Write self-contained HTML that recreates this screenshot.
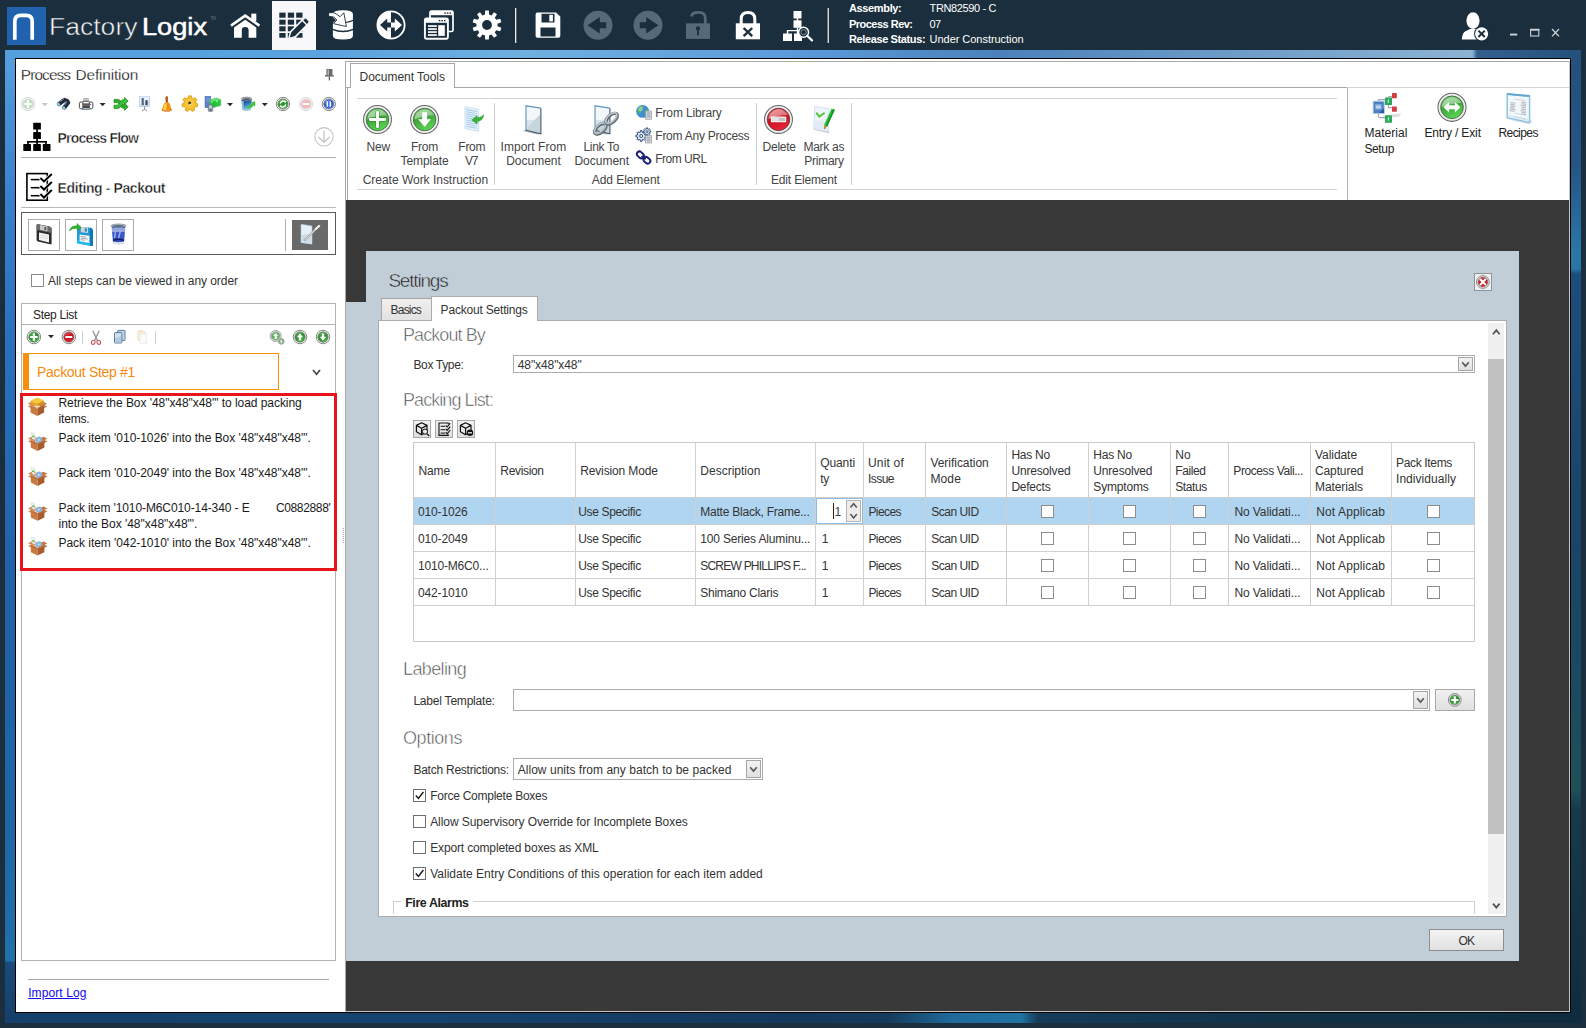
<!DOCTYPE html>
<html>
<head>
<meta charset="utf-8">
<title>FactoryLogix</title>
<style>
*{box-sizing:border-box;margin:0;padding:0}
html,body{width:1586px;height:1028px;overflow:hidden;background:#1b2e3d}
body{font-family:"Liberation Sans",sans-serif;font-size:12px;color:#333;position:relative}
.a{position:absolute}
.t{position:absolute;white-space:pre;line-height:1;font-size:12px}
svg{position:absolute;overflow:visible}
#frame{left:5px;top:50px;width:1576px;height:973px;background:#1d5288}
#ftop{left:0;top:0;width:1576px;height:9px;background:linear-gradient(90deg,#569fdf 0,#5aa3e0 20%,#6eb0e0 33%,#5b9bdb 50%,#4b82bb 63%,#6d9cc8 78%,#8db3d3 93.1%,#33608f 93.4%,#24507c 100%)}
#fleft{left:0;top:0;width:11px;height:973px;background:linear-gradient(180deg,#569fdf 0,#3a80cc 15%,#2c70bd 30%,#2062a8 55%,#1f66a6 80%,#2070a8 93.6%,#1a4a7a 93.8%,#16406c 100%)}
#fright{left:1565px;top:0;width:11px;height:973px;background:linear-gradient(180deg,#24507c 0,#245585 12%,#2a78a8 21%,#2a74a6 22.5%,#1c4e7c 23%,#1a4468 50%,#1b4a60 66%,#1f5058 76%,#163a4c 78%,#0f2c3e 100%)}
#fbot{left:0;top:962px;width:1576px;height:11px;background:linear-gradient(90deg,#16406c 0,#164470 25%,#14385c 50%,#153a5c 56%,#1f6a9a 60%,#2272a2 64.5%,#163c5a 65.5%,#123248 80%,#0f2c3e 100%)}
#content{left:15px;top:58px;width:1556px;height:955px;background:#fff;border:1px solid #000}
.cb{position:absolute;width:13px;height:13px;border:1px solid #8c8c8c;background:#fff}
.btn{position:absolute;border:1px solid #a8a8a8;background:linear-gradient(#f4f4f4,#dfdfdf)}
</style>
</head>
<body>
<div id="frame" class="a"><div id="ftop" class="a"></div><div id="fleft" class="a"></div><div id="fright" class="a"></div><div id="fbot" class="a"></div></div>
<div id="content" class="a"></div>
<svg style="left:0;top:0" width="1586" height="50" viewBox="0 0 1586 50"><rect x="7" y="7" width="39" height="38" fill="#2062ad"/><path d="M14.8 39.8 V21.4 Q14.8 15.3 20.9 15.3 H26.1 Q32.2 15.3 32.2 21.4 V39.8" fill="none" stroke="#fff" stroke-width="3.7"/><path d="M231 25.6 L245.2 15.6 L259.4 25.6" fill="none" stroke="#fff" stroke-width="2.6" stroke-linejoin="miter"/><path d="M234 27.5 L245.2 19.8 L256.3 27.5 V37.8 H248.6 V30 Q248.6 27 245.2 27 Q241.8 27 241.8 30 V37.8 H234Z" fill="#fff"/><rect x="251.3" y="13.6" width="5" height="7.5" fill="#fff"/><rect x="272" y="1" width="44" height="49" fill="#f8f8fa"/><rect x="279.3" y="12.6" width="6.3" height="5.1" fill="#1b2e3d"/><rect x="287.8" y="12.6" width="6.3" height="5.1" fill="#1b2e3d"/><rect x="296.2" y="12.6" width="6.3" height="5.1" fill="#1b2e3d"/><rect x="279.3" y="19.7" width="6.3" height="5" fill="#1b2e3d"/><rect x="287.8" y="19.7" width="6.3" height="5" fill="#1b2e3d"/><rect x="296.2" y="19.7" width="6.3" height="5" fill="#1b2e3d"/><rect x="279.3" y="26.3" width="6.3" height="5" fill="#1b2e3d"/><rect x="287.8" y="26.3" width="6.3" height="5" fill="#1b2e3d"/><rect x="296.2" y="26.3" width="6.3" height="5" fill="#1b2e3d"/><rect x="279.3" y="33" width="6.3" height="4.7" fill="#1b2e3d"/><rect x="287.8" y="33" width="6.3" height="4.7" fill="#1b2e3d"/><rect x="296.2" y="33" width="6.3" height="4.7" fill="#1b2e3d"/><path d="M289.6 37.6 L291.2 31.8 L303.8 19.2 L308 23.4 L295.4 36Z" fill="#f8f8fa" stroke="#f8f8fa" stroke-width="2.6" stroke-linejoin="round"/><path d="M289.8 37.4 L291.3 32.2 L302.2 21.3 L305.9 25 L295 35.9Z M303.3 20.2 L304.6 18.9 Q305.4 18.1 306.3 19 L308.2 20.9 Q309 21.8 308.2 22.6 L306.9 23.9Z" fill="#1b2e3d"/><path d="M332.9 14 Q332.9 10.3 343 10.3 Q352.9 10.3 352.9 14 V36 Q352.9 39.5 343 39.5 Q332.9 39.5 332.9 36Z" fill="#fff"/><path d="M332.5 29.3 Q343 33.6 353.3 29.3" fill="none" stroke="#1b2e3d" stroke-width="1.4"/><path d="M345.5 22.5 Q350 22 353.3 20.3" fill="none" stroke="#1b2e3d" stroke-width="1.2"/><path d="M332 16.8 L336 20 L332 24Z" fill="#1b2e3d"/><path d="M329 13 L334.5 12.8 L340.1 16.7 L343.8 12.7 L346.4 26.5 L333.5 23.7 L336.8 20 L334.2 17.2 L329 16.2Z" fill="#fff" stroke="#1b2e3d" stroke-width="0.9" stroke-linejoin="miter"/><path d="M329 13.4 H333 V15.8 H329Z" fill="#fff"/><circle cx="391" cy="25" r="13.6" fill="none" stroke="#fff" stroke-width="1.8"/><path d="M391 11 A14 14 0 0 0 391 39Z" fill="#fff"/><path d="M380 25 L387.2 18.5 V22.4 H391 V27.6 H387.2 V31.5Z" fill="#1b2e3d"/><path d="M402 25 L394.8 18.5 V22.4 H391 V27.6 H394.8 V31.5Z" fill="#fff"/><rect x="430" y="11" width="23" height="20.5" rx="1.6" fill="#1b2e3d" stroke="#fff" stroke-width="1.7"/><rect x="430.5" y="11" width="22" height="4.2" fill="#fff"/><rect x="444.3" y="12.4" width="1.5" height="1.4" fill="#1b2e3d"/><rect x="446.9" y="12.4" width="1.5" height="1.4" fill="#1b2e3d"/><rect x="449.5" y="12.4" width="1.5" height="1.4" fill="#1b2e3d"/><rect x="424.9" y="18.4" width="23" height="20.3" rx="1.6" fill="#1b2e3d" stroke="#fff" stroke-width="1.9"/><rect x="425" y="18.6" width="22.8" height="4.2" fill="#fff"/><rect x="438.8" y="19.9" width="1.5" height="1.4" fill="#1b2e3d"/><rect x="441.4" y="19.9" width="1.5" height="1.4" fill="#1b2e3d"/><rect x="444" y="19.9" width="1.5" height="1.4" fill="#1b2e3d"/><rect x="428" y="25.2" width="8.8" height="1.7" fill="#fff"/><rect x="428" y="28.2" width="8.8" height="1.7" fill="#fff"/><rect x="428" y="31.2" width="8.8" height="1.7" fill="#fff"/><rect x="428" y="34.2" width="8.8" height="1.7" fill="#fff"/><rect x="438.2" y="25.2" width="6.6" height="10.7" fill="#fff"/><path d="M484.95 14.60 L485.17 10.52 L488.83 10.52 L489.05 14.60 L491.45 15.38 L494.03 12.21 L496.99 14.36 L494.77 17.79 L496.26 19.84 L500.21 18.78 L501.34 22.26 L497.52 23.74 L497.52 26.26 L501.34 27.74 L500.21 31.22 L496.26 30.16 L494.77 32.21 L496.99 35.64 L494.03 37.79 L491.45 34.62 L489.05 35.40 L488.83 39.48 L485.17 39.48 L484.95 35.40 L482.55 34.62 L479.97 37.79 L477.01 35.64 L479.23 32.21 L477.74 30.16 L473.79 31.22 L472.66 27.74 L476.48 26.26 L476.48 23.74 L472.66 22.26 L473.79 18.78 L477.74 19.84 L479.23 17.79 L477.01 14.36 L479.97 12.21 L482.55 15.38Z M482.10 25.00 a4.90 4.90 0 1 0 9.80 0 a4.90 4.90 0 1 0 -9.80 0Z" fill="#fff" fill-rule="evenodd"/><rect x="515" y="8" width="1.3" height="35" fill="#e8eaec"/><rect x="827.6" y="8" width="1.3" height="35" fill="#e8eaec"/><path d="M537.5 12.6 H556 L560.3 16.5 V36 Q560.3 37.8 558.5 37.8 H537.5 Q535.6 37.8 535.6 36 V14.4 Q535.6 12.6 537.5 12.6Z M541.5 13.8 V22.5 H554.5 V13.8Z M540.5 27.5 V36.5 H555.5 V27.5Z" fill="#fff" fill-rule="evenodd"/><rect x="549.3" y="14.8" width="3.6" height="6.6" fill="#fff"/><circle cx="598" cy="25.2" r="14.5" fill="#566978"/><path d="M587.6 25.2 L599.8 17 V22.2 H606.2 V28.2 H599.8 V33.4Z" fill="#1b2e3d"/><circle cx="648" cy="25.2" r="14.5" fill="#566978"/><path d="M658.4 25.2 L646.2 17 V22.2 H639.8 V28.2 H646.2 V33.4Z" fill="#1b2e3d"/><rect x="686" y="23.3" width="24" height="15.6" fill="#566978"/><path d="M691.5 16.5 Q691.8 12.4 698.5 12.4 Q705.3 12.4 705.3 18 V24" fill="none" stroke="#566978" stroke-width="2.8"/><circle cx="698" cy="28.4" r="2.1" fill="#1b2e3d"/><rect x="697.1" y="28.4" width="1.8" height="7" fill="#1b2e3d"/><rect x="735.8" y="23.3" width="24.2" height="16" fill="#fff"/><path d="M741.2 24 V19 Q741.2 12.5 748 12.5 Q754.8 12.5 754.8 19 V24" fill="none" stroke="#fff" stroke-width="3"/><path d="M743.6 28 L752.2 36.2 M752.2 28 L743.6 36.2" stroke="#1b2e3d" stroke-width="2.4" fill="none"/><rect x="793.5" y="11" width="8" height="7.5" fill="#fff"/><rect x="793.5" y="20.3" width="8" height="7.5" fill="#fff"/><rect x="796.8" y="18" width="1.4" height="3" fill="#fff"/><rect x="783" y="33.5" width="9" height="7.5" fill="#fff"/><rect x="794" y="33.5" width="8" height="7.5" fill="#fff"/><path d="M787.5 34 V30.6 H802 M797.5 28 V34" fill="none" stroke="#fff" stroke-width="1.4"/><circle cx="803.6" cy="32.2" r="5" fill="#1b2e3d" stroke="#fff" stroke-width="1.5"/><circle cx="803.6" cy="32.2" r="2.6" fill="none" stroke="#9aa6b0" stroke-width="0.8"/><path d="M807.4 36 L812 40.4" stroke="#fff" stroke-width="2.3" stroke-linecap="round"/><ellipse cx="1473" cy="20.6" rx="6.6" ry="8.4" fill="#fff"/><path d="M1461.8 39.6 Q1462 32.5 1466 31 L1470 29 H1476 L1480 31 Q1484 32.5 1484.2 39.6Z" fill="#fff"/><circle cx="1481.6" cy="33.8" r="7.6" fill="#1b2e3d"/><circle cx="1481.6" cy="33.8" r="6.6" fill="#fff"/><path d="M1478.4 30.6 L1484.8 37 M1484.8 30.6 L1478.4 37" stroke="#1b2e3d" stroke-width="2" fill="none"/><rect x="1510" y="33.6" width="7.2" height="1.9" fill="#cdd2d7"/><rect x="1530.6" y="29.4" width="8.2" height="6.6" fill="none" stroke="#cdd2d7" stroke-width="1.1"/><rect x="1530.1" y="28.9" width="9.2" height="1.8" fill="#cdd2d7"/><path d="M1552 29 L1559 36.4 M1559 29 L1552 36.4" stroke="#cdd2d7" stroke-width="1.3" fill="none"/></svg><div class="t" style="left:49.2px;top:16.0px;font-size:23.5px;letter-spacing:0.00px;color:#f4f6f8;-webkit-text-stroke:0.5px #1b2e3d;transform-origin:0 0;transform:scaleX(1.1294);">Factory</div><div class="t" style="left:142.2px;top:16.0px;font-size:23.5px;letter-spacing:0.00px;color:#fff;-webkit-text-stroke:0.5px #fff;transform-origin:0 0;transform:scaleX(1.1568);">Logix</div><div class="t" style="left:210.4px;top:17.0px;font-size:4.6px;letter-spacing:-1.02px;color:#5f6e7c;">TM</div><div class="t" style="left:849.0px;top:3.0px;font-size:11px;letter-spacing:-0.36px;color:#fff;font-weight:bold;">Assembly:</div><div class="t" style="left:929.6px;top:3.0px;font-size:11px;letter-spacing:-0.37px;color:#fff;">TRN82590 - C</div><div class="t" style="left:849.0px;top:19.0px;font-size:11px;letter-spacing:-0.52px;color:#fff;font-weight:bold;">Process Rev:</div><div class="t" style="left:929.6px;top:19.0px;font-size:11px;letter-spacing:-0.72px;color:#fff;">07</div><div class="t" style="left:849.0px;top:34.0px;font-size:11px;letter-spacing:-0.38px;color:#fff;font-weight:bold;">Release Status:</div><div class="t" style="left:929.6px;top:34.0px;font-size:11px;letter-spacing:-0.04px;color:#fff;">Under Construction</div><div class="t" style="left:20.8px;top:67.0px;font-size:15.4px;letter-spacing:-0.89px;color:#000;-webkit-text-stroke:0.3px #fff;">Process</div><div class="t" style="left:75.6px;top:67.0px;font-size:15.4px;letter-spacing:-0.16px;color:#000;-webkit-text-stroke:0.3px #fff;">Definition</div><svg style="left:0;top:0" width="346" height="1012" viewBox="0 0 346 1012"><g transform="translate(325 68.6)"><rect x="1.4" y="0.4" width="6" height="6.4" fill="#6a6a6a"/><rect x="2.6" y="1" width="1.2" height="5.4" fill="#c8c8c8"/><rect x="0" y="6.6" width="8.8" height="1.3" fill="#555"/><rect x="3.8" y="7.8" width="1.2" height="4" fill="#555"/></g><g opacity="0.32"><defs><linearGradient id="g1" x1="0.2" y1="0" x2="0.6" y2="1"><stop offset="0" stop-color="#58c254"/><stop offset="0.45" stop-color="#2a8f2c"/><stop offset="1" stop-color="#3fb53c"/></linearGradient></defs><circle cx="28" cy="104" r="6.65" fill="#f3f3f3" stroke="#7a7a7a" stroke-width="0.9"/><circle cx="28" cy="104" r="5.112" fill="url(#g1)" stroke="#767a76" stroke-width="0.7"/><g transform="translate(28 104) scale(7.1)"><path d="M-0.52 0 H0.52 M0 -0.52 V0.52" stroke="#fff" stroke-width="0.3"/></g></g><path d="M41.8 103.05 h6 l-3 3.1Z" fill="#c4c4c4"/><g><g transform="rotate(-36 61.4 102)"><rect x="56.2" y="100" width="10.6" height="4.3" rx="1.8" fill="#222e3c"/><rect x="56.5" y="100.5" width="2.4" height="3.3" rx="1" fill="#86d2f6"/><path d="M60.2 100.9 h1 M62.4 100.9 h1 M64.4 100.9 h0.8" stroke="#dfe6ec" stroke-width="0.9"/></g><g transform="rotate(-52 66.2 105)"><rect x="61" y="102.9" width="10.2" height="4.3" rx="1.8" fill="#222e3c"/><rect x="61.3" y="103.4" width="2.4" height="3.3" rx="1" fill="#86d2f6"/><path d="M65 103.8 h1 M67.2 103.8 h1" stroke="#dfe6ec" stroke-width="0.9"/></g><path d="M64.8 98.4 Q68.4 98 69.8 101.2 L67.4 101.8 L64.8 100.2Z" fill="#222e3c"/></g><g><rect x="83.2" y="98.2" width="5.6" height="4.4" rx="0.8" fill="#9a9a9a"/><rect x="83.6" y="99" width="4.8" height="1.4" fill="#c8c8c8"/><rect x="79.4" y="102" width="13.4" height="6.8" rx="1.4" fill="#fafafa" stroke="#3a3a3a" stroke-width="0.9"/><path d="M82.4 102 h7.4 v6.8 h-7.4Z" fill="#4a4648"/><rect x="83.4" y="102" width="5.4" height="1.4" fill="#fff"/><path d="M82.4 104.4 h7.4 v1.6 h-7.4Z" fill="#6e6a6c"/><rect x="82.6" y="108" width="7" height="1.6" fill="#bdeef4" stroke="#444" stroke-width="0.5"/><rect x="90.2" y="103.8" width="0.9" height="1.2" fill="#2a4cff"/></g><path d="M99.6 103.05 h6 l-3 3.1Z" fill="#2a2a2a"/><g transform="translate(121 104)"><path d="M-7 -4.6 H-3.2 Q-1.4 -4.6 0 -2.6 L1.6 -0.2 Q2.6 1.2 3.6 1.2 V-0.8 L7.2 2.8 L3.6 6.4 V4.4 Q1 4.4 -0.6 2.2 L-2.2 -0.2 Q-3 -1.4 -4 -1.4 H-7Z" fill="#2fae2c" stroke="#16801a" stroke-width="0.7"/><path d="M-7 4.4 H-3.2 Q-1.4 4.4 0 2.4 L1.6 0 Q2.6 -1.4 3.6 -1.4 V0.6 L7.2 -3 L3.6 -6.6 V-4.6 Q1 -4.6 -0.6 -2.4 L-2.2 0 Q-3 1.2 -4 1.2 H-7Z" fill="#3cc238" stroke="#16801a" stroke-width="0.7"/></g><g><rect x="139.4" y="96.3" width="10.2" height="10.2" fill="#d4e6f8" stroke="#a9c6e4" stroke-width="0.7"/><path d="M139.8 96.6 L149.2 96.6 L149.2 100 Q144 102 139.8 105Z" fill="#eef5fc" opacity="0.7"/><rect x="141.6" y="98" width="2.2" height="7.2" fill="#5b6778"/><rect x="145.4" y="100.2" width="2.2" height="5" fill="#39465c"/><path d="M144.5 106.5 V109.6 M141.8 111.2 L144.5 109.2 L147.2 111.2" stroke="#8a9096" stroke-width="1" fill="none"/></g><g><path d="M165.6 97 Q166.8 95.4 168 97 L167.8 102.6 H165.8Z" fill="#8e4a10"/><ellipse cx="166.8" cy="98.6" rx="1.3" ry="2.2" fill="#b0661c"/><path d="M165.2 102.2 H168.4 Q170.4 103.6 170.8 107.6 L172 109.8 Q166.8 112.4 161.6 109.8 L162.8 107.6 Q163.2 103.6 165.2 102.2Z" fill="#f28c12"/><path d="M164.6 103.8 Q166 103 166.6 103.4 L166.4 110.4 Q164.6 110.4 163.2 109.6 Q164 106 164.6 103.8Z" fill="#ffd945"/><path d="M161.6 109.8 Q166.8 112.6 172 109.8 L171.8 110.6 Q166.8 113 161.8 110.6Z" fill="#c65a08"/></g><path d="M187.99 98.01 L188.47 95.83 L191.33 95.83 L191.81 98.01 L193.16 98.66 L195.16 97.68 L196.94 99.91 L195.54 101.64 L195.87 103.11 L197.89 104.06 L197.26 106.84 L195.02 106.82 L194.09 108.00 L194.60 110.17 L192.03 111.41 L190.65 109.65 L189.15 109.65 L187.77 111.41 L185.20 110.17 L185.71 108.00 L184.78 106.82 L182.54 106.84 L181.91 104.06 L183.93 103.11 L184.26 101.64 L182.86 99.91 L184.64 97.68 L186.64 98.66Z M188.30 103.70 a1.60 1.60 0 1 0 3.20 0 a1.60 1.60 0 1 0 -3.20 0Z" fill="#f4bd2a" stroke="#d8920e" stroke-width="0.7" stroke-linejoin="round" fill-rule="evenodd"/><circle cx="189.9" cy="103.7" r="4.6" fill="#f9cf46" opacity="0.7"/><circle cx="189.7" cy="102.9" r="1.5" fill="#3a2a0c"/><circle cx="190.2" cy="104.4" r="0.8" fill="#fff" opacity="0.8"/><g><rect x="205" y="96.3" width="5.8" height="11.4" fill="#5d82c6" stroke="#4468ac" stroke-width="0.5"/><path d="M205.6 98 h4.4 M205.6 99.6 h4.4 M205.6 101.2 h4.4" stroke="#8fa9dc" stroke-width="0.6"/><path d="M209.6 100 L216.4 98 L220.8 99.6 V105.6 L214 107.4 L209.6 105.6Z" fill="#22c93a" stroke="#86a08a" stroke-width="0.5"/><path d="M209.6 100 L214 101.6 L220.8 99.6 L216.4 98Z" fill="#5fe070"/><path d="M214 101.6 V107.4" stroke="#1a9c2c" stroke-width="0.6"/><path d="M211 101.6 l1.6 0.6 M216 101.4 l2 -0.6" stroke="#e6ffe8" stroke-width="0.8"/><rect x="208.2" y="104.4" width="4.6" height="7" rx="0.8" fill="#8d9aa6" stroke="#5a6874" stroke-width="0.5"/><rect x="209.2" y="105.6" width="2.6" height="2.6" fill="#c9d4dc"/><circle cx="210.5" cy="110" r="0.7" fill="#2a4a78"/></g><path d="M227 103.05 h6 l-3 3.1Z" fill="#2a2a2a"/><g><defs><linearGradient id="binb" x1="0" y1="0" x2="0.3" y2="1"><stop offset="0" stop-color="#173a78"/><stop offset="0.5" stop-color="#2a6eb4"/><stop offset="1" stop-color="#8ad6f6"/></linearGradient></defs><path d="M241.6 99 H251.6 L251 109.4 Q246.6 111.6 242.2 109.4Z" fill="url(#binb)"/><path d="M242 101 L243.6 101 L243.6 108.6 L242.4 108.4Z" fill="#a8e0fa" opacity="0.8"/><path d="M242.2 109.2 Q246.6 111 251 109.2 L250.9 110 Q246.6 112 242.3 110Z" fill="#b4bcc2"/><ellipse cx="246.6" cy="98.8" rx="5.1" ry="1.7" fill="#b9bdc0" stroke="#6a7076" stroke-width="0.6"/><ellipse cx="246.6" cy="99.1" rx="3.8" ry="0.9" fill="#4a5866"/><path d="M246.6 107 Q250.4 106.6 251.8 103.6 L250.4 102.8 L255 101.4 L255 106.2 L253.6 105.2 Q251.6 108.8 246.8 108.4Z" fill="#2fd02e" stroke="#7f9a84" stroke-width="0.4"/></g><path d="M261.8 103.05 h6 l-3 3.1Z" fill="#2a2a2a"/><g opacity="1"><defs><linearGradient id="g2" x1="0.2" y1="0" x2="0.6" y2="1"><stop offset="0" stop-color="#58c254"/><stop offset="0.45" stop-color="#2a8f2c"/><stop offset="1" stop-color="#3fb53c"/></linearGradient></defs><circle cx="283" cy="104" r="6.65" fill="#f3f3f3" stroke="#7a7a7a" stroke-width="0.9"/><circle cx="283" cy="104" r="5.112" fill="url(#g2)" stroke="#767a76" stroke-width="0.7"/><g transform="translate(283 104) scale(7.1)"><path d="M-0.38 -0.05 A0.4 0.4 0 0 1 0.3 -0.3 M0.38 0.05 A0.4 0.4 0 0 1 -0.3 0.3" stroke="#fff" stroke-width="0.2" fill="none"/><path d="M0.12 -0.5 L0.5 -0.42 L0.3 -0.08Z M-0.12 0.5 L-0.5 0.42 L-0.3 0.08Z" fill="#fff"/></g></g><g opacity="0.3"><defs><linearGradient id="g3" x1="0.2" y1="0" x2="0.6" y2="1"><stop offset="0" stop-color="#e85a62"/><stop offset="0.45" stop-color="#c8101e"/><stop offset="1" stop-color="#e02030"/></linearGradient></defs><circle cx="306" cy="104" r="6.65" fill="#f3f3f3" stroke="#7a7a7a" stroke-width="0.9"/><circle cx="306" cy="104" r="5.112" fill="url(#g3)" stroke="#767a76" stroke-width="0.7"/><g transform="translate(306 104) scale(7.1)"><rect x="-0.48" y="-0.15" width="0.96" height="0.3" rx="0.06" fill="#fff"/></g></g><g opacity="1"><defs><linearGradient id="g4" x1="0.2" y1="0" x2="0.6" y2="1"><stop offset="0" stop-color="#7aa0f0"/><stop offset="0.45" stop-color="#2d58d0"/><stop offset="1" stop-color="#4a7af0"/></linearGradient></defs><circle cx="328.8" cy="104" r="6.65" fill="#f3f3f3" stroke="#7a7a7a" stroke-width="0.9"/><circle cx="328.8" cy="104" r="5.112" fill="url(#g4)" stroke="#767a76" stroke-width="0.7"/><g transform="translate(328.8 104) scale(7.1)"><rect x="-0.32" y="-0.36" width="0.22" height="0.72" fill="#fff"/><rect x="0.1" y="-0.36" width="0.22" height="0.72" fill="#fff"/></g></g><g fill="#000"><rect x="33.2" y="122.7" width="7.7" height="6.9" rx="0.6"/><rect x="33.2" y="132.1" width="7.7" height="6.9" rx="0.6"/><rect x="36.2" y="129" width="1.7" height="4"/><rect x="36.2" y="138.6" width="1.7" height="6"/><rect x="27.2" y="141" width="19.6" height="1.6"/><rect x="27.2" y="141" width="1.6" height="4"/><rect x="45.2" y="141" width="1.6" height="4"/><rect x="23.3" y="144.1" width="7.7" height="6.9" rx="0.6"/><rect x="33.2" y="144.1" width="7.7" height="6.9" rx="0.6"/><rect x="42.8" y="144.1" width="7.7" height="6.9" rx="0.6"/></g><circle cx="324" cy="136.8" r="9.2" fill="none" stroke="#c4c4c4" stroke-width="1.1"/><path d="M324 130.8 V142 M318.6 137 L324 142.4 L329.4 137" fill="none" stroke="#c4c4c4" stroke-width="1.3"/><g><rect x="26.9" y="173.6" width="20.4" height="26.6" fill="none" stroke="#000" stroke-width="1.6"/><rect x="30.8" y="178.85" width="9" height="1.5" fill="#000"/><path d="M40.4 178 L44 181.4 L51.8 174" fill="none" stroke="#fff" stroke-width="3.4"/><path d="M40.4 178 L44 181.4 L51.8 174" fill="none" stroke="#000" stroke-width="2"/><rect x="30.8" y="186.95" width="9" height="1.5" fill="#000"/><path d="M40.4 186.1 L44 189.5 L51.8 182.1" fill="none" stroke="#fff" stroke-width="3.4"/><path d="M40.4 186.1 L44 189.5 L51.8 182.1" fill="none" stroke="#000" stroke-width="2"/><rect x="30.8" y="194.95" width="9" height="1.5" fill="#000"/><path d="M40.4 194.1 L44 197.5 L51.8 190.1" fill="none" stroke="#fff" stroke-width="3.4"/><path d="M40.4 194.1 L44 197.5 L51.8 190.1" fill="none" stroke="#000" stroke-width="2"/></g></svg><div class="t" style="left:57.6px;top:131.0px;font-size:14px;letter-spacing:-0.82px;color:#111;font-weight:bold;-webkit-text-stroke:0.4px #fff;">Process Flow</div><div class="a" style="left:21px;top:157px;width:315px;height:1px;background:#b0b0b0"></div><div class="t" style="left:57.6px;top:181.0px;font-size:14px;letter-spacing:-0.40px;color:#111;font-weight:bold;-webkit-text-stroke:0.4px #fff;">Editing - Packout</div><div class="a" style="left:21px;top:207px;width:315px;height:1px;background:#b8b8b8"></div><div class="a" style="left:21px;top:212px;width:315px;height:43px;border:1px solid #5a5a5a;background:#fff"></div><div class="a" style="left:28px;top:219px;width:32px;height:32px;border:1px solid #ababab;background:#fff"></div><div class="a" style="left:65px;top:219px;width:32px;height:32px;border:1px solid #ababab;background:#fff"></div><div class="a" style="left:102px;top:219px;width:32px;height:32px;border:1px solid #ababab;background:#fff"></div><div class="a" style="left:285px;top:219px;width:1px;height:32px;background:#b0b0b0"></div><div class="a" style="left:292px;top:220px;width:36px;height:30px;background:#696969"></div><svg style="left:0;top:0" width="346" height="1012" viewBox="0 0 346 1012"><g transform="translate(36 224)"><path d="M0.6 1.2 Q0.6 0 2 0.2 L13.4 2.4 Q15.4 2.8 15.6 4.6 V19.4 Q15.6 20.6 14 20.2 L1.8 17.4 Q0.6 17 0.6 15.8Z" fill="#2c2c2c"/><path d="M0.6 1.2 Q0.6 0 2 0.2 L13.4 2.4 Q15.4 2.8 15.6 4.6 V9 L0.6 6Z" fill="#6c6c6c"/><path d="M4 1 L11.4 2.4 V7.2 L4 5.8Z" fill="#c9c9c9"/><rect x="8.4" y="3" width="1.8" height="3" fill="#555"/><path d="M3 8.6 L13 10.6 V18.4 L3 16Z" fill="#f2f2f2"/><path d="M4 11 L12 12.6 M4 13 L12 14.6" stroke="#ccc" stroke-width="0.6"/></g><g transform="translate(77 226.4)"><path d="M0 1.6 Q0 0.4 1.4 0.4 L12 1 Q15.8 1.4 16 5 V18.6 Q16 19.8 14.6 19.6 L1.2 17.2 Q0 17 0 15.8Z" fill="#1e9ad6"/><path d="M13 1.2 Q15.8 1.6 16 5 V18.6 Q16 19.8 14.6 19.6 L13 19.3Z" fill="#0f78b4"/><path d="M0 13 L13 15.4 V19.3 L1.2 17.2 Q0 17 0 15.8Z" fill="#20b8ee"/><path d="M3.8 0.6 L11 1 V6.6 L3.8 5.8Z" fill="#d2d2d2"/><rect x="7.8" y="2" width="2" height="3.2" fill="#1e86c8"/><path d="M2.6 8 L12.4 9.4 V16.6 L2.6 14.8Z" fill="#f4f8fa"/><path d="M3.6 10 L9 10.8 M3.6 11.6 L11 12.7 M3.6 13.2 L8 13.9" stroke="#777" stroke-width="0.6"/><path d="M-7.6 4.6 Q-6.6 -0.6 0 -0.6 V-3 L4.2 0.8 L0 4.2 V2 Q-5 1.6 -7.6 4.6Z" fill="#2fb12c" stroke="#1d8a22" stroke-width="0.4"/></g><g transform="translate(111 224)"><path d="M0.6 1.6 H14.4 L13 19 Q7.5 21.4 2 19Z" fill="#3a56c8"/><path d="M0.8 4 H14.2 L13.8 8 H1.2Z" fill="#b4c2ea" opacity="0.75"/><path d="M4.6 6 L3.6 14 M9.6 6 L7.4 15" stroke="#9fb2f0" stroke-width="1.4"/><path d="M2 15.4 Q7.5 13 13 15.4 L12.9 17 Q7.5 15.4 2.1 17Z" fill="#16206a"/><path d="M2 17.4 Q7.5 19 13 17.4 L12.9 19.2 Q7.5 21.4 2.1 19.2Z" fill="#e4e8ec"/><ellipse cx="7.5" cy="1.8" rx="7.3" ry="1.8" fill="#aeb8bc" stroke="#7c8890" stroke-width="0.7"/><ellipse cx="7.5" cy="2" rx="5.6" ry="1" fill="#5a6e88"/></g><g transform="translate(301 224.3)"><path d="M-0.8 19 L10.8 20.8 L11.4 20 L0 18.2Z" fill="#3c4850"/><path d="M0 0 L11 1.6 V20 L0 18.4Z" fill="#e6f0f6" stroke="#a8cbe0" stroke-width="0.6"/><path d="M0.4 10.4 L10.6 9.4 V19.6 L0.4 18Z" fill="#cfdde6"/><path d="M2.6 15.8 L18 0.4 L19.4 1.6 L4.4 16.2Z" fill="#dcdcdc" stroke="#7a7a7a" stroke-width="0.5"/><path d="M13.4 4.8 L18 0.4 L19.4 1.6 L14.8 6Z" fill="#f4f4f4"/></g></svg><div class="a" style="left:31px;top:274px;width:13px;height:13px;border:1px solid #8a8a8a;background:#fff"></div><div class="t" style="left:48.0px;top:275.0px;font-size:12px;letter-spacing:-0.06px;color:#333;">All steps can be viewed in any order</div><div class="a" style="left:21px;top:303px;width:315px;height:658px;border:1px solid #b2b2b2;background:#fff"></div><div class="t" style="left:33.0px;top:309.0px;font-size:12px;letter-spacing:-0.30px;color:#222;">Step List</div><div class="a" style="left:22px;top:324px;width:313px;height:1px;background:#b2b2b2"></div><div class="a" style="left:82px;top:331px;width:1px;height:13px;background:#d0d0d0"></div><div class="a" style="left:155px;top:331px;width:1px;height:13px;background:#d0d0d0"></div><svg style="left:0;top:0" width="346" height="1012" viewBox="0 0 346 1012"><g opacity="1"><defs><linearGradient id="g5" x1="0.2" y1="0" x2="0.6" y2="1"><stop offset="0" stop-color="#58c254"/><stop offset="0.45" stop-color="#2a8f2c"/><stop offset="1" stop-color="#3fb53c"/></linearGradient></defs><circle cx="33.9" cy="337" r="6.75" fill="#f3f3f3" stroke="#7a7a7a" stroke-width="0.9"/><circle cx="33.9" cy="337" r="5.184" fill="url(#g5)" stroke="#767a76" stroke-width="0.7"/><g transform="translate(33.9 337) scale(7.2)"><path d="M-0.52 0 H0.52 M0 -0.52 V0.52" stroke="#fff" stroke-width="0.3"/></g></g><path d="M48 335.05 h6 l-3 3.1Z" fill="#2a2a2a"/><g opacity="1"><defs><linearGradient id="g6" x1="0.2" y1="0" x2="0.6" y2="1"><stop offset="0" stop-color="#e85a62"/><stop offset="0.45" stop-color="#c8101e"/><stop offset="1" stop-color="#e02030"/></linearGradient></defs><circle cx="68.8" cy="337" r="6.75" fill="#f3f3f3" stroke="#7a7a7a" stroke-width="0.9"/><circle cx="68.8" cy="337" r="5.184" fill="url(#g6)" stroke="#767a76" stroke-width="0.7"/><g transform="translate(68.8 337) scale(7.2)"><rect x="-0.48" y="-0.15" width="0.96" height="0.3" rx="0.06" fill="#fff"/></g></g><g transform="translate(96 337.3)"><path d="M-3.2 -6.6 L1.4 3.2 M3.2 -6.6 L-1.4 3.2" stroke="#8a9098" stroke-width="1.3" fill="none"/><ellipse cx="-2.8" cy="5" rx="1.7" ry="2.1" fill="none" stroke="#c0484a" stroke-width="1" transform="rotate(25 -2.8 5)"/><ellipse cx="2.8" cy="5" rx="1.7" ry="2.1" fill="none" stroke="#c0484a" stroke-width="1" transform="rotate(-25 2.8 5)"/></g><g transform="translate(114 330)" opacity="1"><rect x="3.6" y="0.4" width="7.4" height="10" rx="0.6" fill="#c4d8ea" stroke="#47709a" stroke-width="0.9"/><rect x="0.5" y="2.6" width="7.4" height="10.4" rx="0.6" fill="#d4e2ee" stroke="#47709a" stroke-width="0.9"/><path d="M1.2 8 L7.2 6 V12.4 H1.2Z" fill="#b4c8da"/></g><g transform="translate(137 330)" opacity="0.45"><rect x="0.4" y="1" width="7.6" height="9.6" rx="0.8" fill="#f0d8a0" stroke="#d8b870" stroke-width="0.6"/><rect x="2.4" y="0" width="3.6" height="2" fill="#d8c090"/><rect x="3" y="4" width="6.8" height="9.6" fill="#f4f4f4" stroke="#c8c8c8" stroke-width="0.6"/></g><g opacity="0.75"><g opacity="1"><defs><linearGradient id="g7" x1="0.2" y1="0" x2="0.6" y2="1"><stop offset="0" stop-color="#58c254"/><stop offset="0.45" stop-color="#2a8f2c"/><stop offset="1" stop-color="#3fb53c"/></linearGradient></defs><circle cx="275.7" cy="336" r="5.55" fill="#f3f3f3" stroke="#7a7a7a" stroke-width="0.9"/><circle cx="275.7" cy="336" r="4.32" fill="url(#g7)" stroke="#767a76" stroke-width="0.7"/><g transform="translate(275.7 336) scale(6)"><path d="M-0.17 0.5 H0.17 V0.02 H0.44 L0 -0.52 L-0.44 0.02 H-0.17Z" fill="#fff"/></g></g><g opacity="1"><defs><linearGradient id="g8" x1="0.2" y1="0" x2="0.6" y2="1"><stop offset="0" stop-color="#58c254"/><stop offset="0.45" stop-color="#2a8f2c"/><stop offset="1" stop-color="#3fb53c"/></linearGradient></defs><circle cx="281.3" cy="341.4" r="2.85" fill="#f3f3f3" stroke="#7a7a7a" stroke-width="0.9"/><circle cx="281.3" cy="341.4" r="2.376" fill="url(#g8)" stroke="#767a76" stroke-width="0.7"/><g transform="translate(281.3 341.4) scale(3.3)"><path d="M-0.17 0.5 H0.17 V0.02 H0.44 L0 -0.52 L-0.44 0.02 H-0.17Z" fill="#fff"/></g></g></g><g opacity="1"><defs><linearGradient id="g9" x1="0.2" y1="0" x2="0.6" y2="1"><stop offset="0" stop-color="#58c254"/><stop offset="0.45" stop-color="#2a8f2c"/><stop offset="1" stop-color="#3fb53c"/></linearGradient></defs><circle cx="300" cy="337" r="6.75" fill="#f3f3f3" stroke="#7a7a7a" stroke-width="0.9"/><circle cx="300" cy="337" r="5.184" fill="url(#g9)" stroke="#767a76" stroke-width="0.7"/><g transform="translate(300 337) scale(7.2)"><path d="M-0.17 0.5 H0.17 V0.02 H0.44 L0 -0.52 L-0.44 0.02 H-0.17Z" fill="#fff"/></g></g><g opacity="1"><defs><linearGradient id="g10" x1="0.2" y1="0" x2="0.6" y2="1"><stop offset="0" stop-color="#58c254"/><stop offset="0.45" stop-color="#2a8f2c"/><stop offset="1" stop-color="#3fb53c"/></linearGradient></defs><circle cx="323" cy="337" r="6.75" fill="#f3f3f3" stroke="#7a7a7a" stroke-width="0.9"/><circle cx="323" cy="337" r="5.184" fill="url(#g10)" stroke="#767a76" stroke-width="0.7"/><g transform="translate(323 337) scale(7.2)"><path d="M-0.17 -0.5 H0.17 V-0.02 H0.44 L0 0.52 L-0.44 -0.02 H-0.17Z" fill="#fff"/></g></g><path d="M313 370 L316.5 374.2 L320 370" fill="none" stroke="#444" stroke-width="1.7"/><rect x="342.6" y="528" width="1.4" height="1" fill="#b0b0b0"/><rect x="342.6" y="530" width="1.4" height="1" fill="#b0b0b0"/><rect x="342.6" y="532" width="1.4" height="1" fill="#b0b0b0"/><rect x="342.6" y="534" width="1.4" height="1" fill="#b0b0b0"/><rect x="342.6" y="536" width="1.4" height="1" fill="#b0b0b0"/><rect x="342.6" y="538" width="1.4" height="1" fill="#b0b0b0"/><rect x="342.6" y="540" width="1.4" height="1" fill="#b0b0b0"/><rect x="342.6" y="542" width="1.4" height="1" fill="#b0b0b0"/></svg><div class="a" style="left:23px;top:353px;width:256px;height:37px;border:1px solid #f5900c;border-left:6px solid #f5900c;background:#fff"></div><div class="t" style="left:37.0px;top:365.0px;font-size:14px;letter-spacing:-0.32px;color:#f58a10;">Packout Step #1</div><div class="a" style="left:20px;top:393px;width:317px;height:178px;border:3px solid #e8141c"></div><svg style="left:0;top:0" width="346" height="1012" viewBox="0 0 346 1012"><g transform="translate(27.3 397.2)"><path d="M0.4 6.4 L4 4.6 L10 7 L6.4 9.2Z" fill="#d08a58"/><path d="M19.8 6.6 L16 4.6 L10 7 L13.8 9.4Z" fill="#c27844"/><path d="M0.2 9.2 L3.6 7.4 L10 10.4 L6.6 12.4Z" fill="#d99a6a"/><path d="M20 9.4 L16.4 7.4 L10 10.4 L13.6 12.6Z" fill="#cc8250"/><path d="M3.2 8.4 L10 11.4 V18.8 L3.2 15.4Z" fill="#c87a42"/><path d="M16.8 8.4 L10 11.4 V18.8 L16.8 15.4Z" fill="#a85c2c"/><path d="M3.6 3.2 L10 0.4 L16.6 3.2 L10 6.2Z" fill="#f6c93c"/><path d="M3.6 3.2 L10 6.2 V9.4 L3.6 6.4Z" fill="#e8a920"/><path d="M16.6 3.2 L10 6.2 V9.4 L16.6 6.4Z" fill="#d4930f"/></g><g transform="translate(27.6 432.2)"><path d="M0.4 6.4 L4 4.6 L10 7 L6.4 9.2Z" fill="#d08a58"/><path d="M19.8 6.6 L16 4.6 L10 7 L13.8 9.4Z" fill="#c27844"/><path d="M0.2 9.2 L3.6 7.4 L10 10.4 L6.6 12.4Z" fill="#d99a6a"/><path d="M20 9.4 L16.4 7.4 L10 10.4 L13.6 12.6Z" fill="#cc8250"/><path d="M3.2 8.4 L10 11.4 V18.8 L3.2 15.4Z" fill="#c87a42"/><path d="M16.8 8.4 L10 11.4 V18.8 L16.8 15.4Z" fill="#a85c2c"/><path d="M3.4 0.4 L6.8 1 L8 7.6 L4.8 6.8Z" fill="#eef2f4" stroke="#c8d0d4" stroke-width="0.4"/><rect x="4.6" y="3.4" width="2" height="1.4" fill="#4ab848"/><rect x="6.4" y="4.6" width="1.6" height="1.2" fill="#f0a030"/><ellipse cx="11.2" cy="7.6" rx="3.4" ry="3" fill="#8ab4dc" transform="rotate(-25 11.2 7.6)"/><ellipse cx="11.2" cy="7.6" rx="1" ry="0.9" fill="#dbe8f4" transform="rotate(-25 11.2 7.6)"/><path d="M3.2 8.4 L10 11.4 L16.8 8.4 L16.8 9.6 L10 12.6 L3.2 9.6Z" fill="#b86a36"/></g><g transform="translate(27.6 467.2)"><path d="M0.4 6.4 L4 4.6 L10 7 L6.4 9.2Z" fill="#d08a58"/><path d="M19.8 6.6 L16 4.6 L10 7 L13.8 9.4Z" fill="#c27844"/><path d="M0.2 9.2 L3.6 7.4 L10 10.4 L6.6 12.4Z" fill="#d99a6a"/><path d="M20 9.4 L16.4 7.4 L10 10.4 L13.6 12.6Z" fill="#cc8250"/><path d="M3.2 8.4 L10 11.4 V18.8 L3.2 15.4Z" fill="#c87a42"/><path d="M16.8 8.4 L10 11.4 V18.8 L16.8 15.4Z" fill="#a85c2c"/><path d="M3.4 0.4 L6.8 1 L8 7.6 L4.8 6.8Z" fill="#eef2f4" stroke="#c8d0d4" stroke-width="0.4"/><rect x="4.6" y="3.4" width="2" height="1.4" fill="#4ab848"/><rect x="6.4" y="4.6" width="1.6" height="1.2" fill="#f0a030"/><ellipse cx="11.2" cy="7.6" rx="3.4" ry="3" fill="#8ab4dc" transform="rotate(-25 11.2 7.6)"/><ellipse cx="11.2" cy="7.6" rx="1" ry="0.9" fill="#dbe8f4" transform="rotate(-25 11.2 7.6)"/><path d="M3.2 8.4 L10 11.4 L16.8 8.4 L16.8 9.6 L10 12.6 L3.2 9.6Z" fill="#b86a36"/></g><g transform="translate(27.6 502)"><path d="M0.4 6.4 L4 4.6 L10 7 L6.4 9.2Z" fill="#d08a58"/><path d="M19.8 6.6 L16 4.6 L10 7 L13.8 9.4Z" fill="#c27844"/><path d="M0.2 9.2 L3.6 7.4 L10 10.4 L6.6 12.4Z" fill="#d99a6a"/><path d="M20 9.4 L16.4 7.4 L10 10.4 L13.6 12.6Z" fill="#cc8250"/><path d="M3.2 8.4 L10 11.4 V18.8 L3.2 15.4Z" fill="#c87a42"/><path d="M16.8 8.4 L10 11.4 V18.8 L16.8 15.4Z" fill="#a85c2c"/><path d="M3.4 0.4 L6.8 1 L8 7.6 L4.8 6.8Z" fill="#eef2f4" stroke="#c8d0d4" stroke-width="0.4"/><rect x="4.6" y="3.4" width="2" height="1.4" fill="#4ab848"/><rect x="6.4" y="4.6" width="1.6" height="1.2" fill="#f0a030"/><ellipse cx="11.2" cy="7.6" rx="3.4" ry="3" fill="#8ab4dc" transform="rotate(-25 11.2 7.6)"/><ellipse cx="11.2" cy="7.6" rx="1" ry="0.9" fill="#dbe8f4" transform="rotate(-25 11.2 7.6)"/><path d="M3.2 8.4 L10 11.4 L16.8 8.4 L16.8 9.6 L10 12.6 L3.2 9.6Z" fill="#b86a36"/></g><g transform="translate(27.6 536.8)"><path d="M0.4 6.4 L4 4.6 L10 7 L6.4 9.2Z" fill="#d08a58"/><path d="M19.8 6.6 L16 4.6 L10 7 L13.8 9.4Z" fill="#c27844"/><path d="M0.2 9.2 L3.6 7.4 L10 10.4 L6.6 12.4Z" fill="#d99a6a"/><path d="M20 9.4 L16.4 7.4 L10 10.4 L13.6 12.6Z" fill="#cc8250"/><path d="M3.2 8.4 L10 11.4 V18.8 L3.2 15.4Z" fill="#c87a42"/><path d="M16.8 8.4 L10 11.4 V18.8 L16.8 15.4Z" fill="#a85c2c"/><path d="M3.4 0.4 L6.8 1 L8 7.6 L4.8 6.8Z" fill="#eef2f4" stroke="#c8d0d4" stroke-width="0.4"/><rect x="4.6" y="3.4" width="2" height="1.4" fill="#4ab848"/><rect x="6.4" y="4.6" width="1.6" height="1.2" fill="#f0a030"/><ellipse cx="11.2" cy="7.6" rx="3.4" ry="3" fill="#8ab4dc" transform="rotate(-25 11.2 7.6)"/><ellipse cx="11.2" cy="7.6" rx="1" ry="0.9" fill="#dbe8f4" transform="rotate(-25 11.2 7.6)"/><path d="M3.2 8.4 L10 11.4 L16.8 8.4 L16.8 9.6 L10 12.6 L3.2 9.6Z" fill="#b86a36"/></g></svg><div class="t" style="left:58.5px;top:397.0px;font-size:12px;letter-spacing:-0.05px;color:#1a1a1a;">Retrieve the Box '48"x48"x48"' to load packing</div><div class="t" style="left:58.5px;top:413.0px;font-size:12px;letter-spacing:-0.17px;color:#1a1a1a;">items.</div><div class="t" style="left:58.5px;top:432.0px;font-size:12px;letter-spacing:-0.04px;color:#1a1a1a;">Pack item '010-1026' into the Box '48"x48"x48"'.</div><div class="t" style="left:58.5px;top:467.0px;font-size:12px;letter-spacing:-0.04px;color:#1a1a1a;">Pack item '010-2049' into the Box '48"x48"x48"'.</div><div class="t" style="left:58.5px;top:502.0px;font-size:12px;letter-spacing:-0.10px;color:#1a1a1a;">Pack item '1010-M6C010-14-340 - E</div><div class="t" style="left:275.9px;top:502.0px;font-size:12px;letter-spacing:-0.35px;color:#1a1a1a;">C0882888'</div><div class="t" style="left:58.5px;top:518.0px;font-size:12px;letter-spacing:-0.02px;color:#1a1a1a;">into the Box '48"x48"x48"'.</div><div class="t" style="left:58.5px;top:537.0px;font-size:12px;letter-spacing:-0.04px;color:#1a1a1a;">Pack item '042-1010' into the Box '48"x48"x48"'.</div><div class="a" style="left:28px;top:979px;width:301px;height:1px;background:#a8a8a8"></div><div class="t" style="left:28.2px;top:987.0px;font-size:12px;letter-spacing:0.09px;color:#1208f0;text-decoration:underline;">Import Log</div><div class="a" style="left:345px;top:61px;width:1225px;height:951px;border:1px solid #a8a8a8;border-right-color:#c4c4c4;border-bottom-color:#c4c4c4;background:#fff"></div><div class="a" style="left:346px;top:87px;width:1001px;height:1px;background:#a8a8a8"></div><div class="a" style="left:1347px;top:87px;width:222px;height:1px;background:#d4d4d4"></div><div class="a" style="left:350px;top:63px;width:105px;height:25px;border:1px solid #a8a8a8;border-bottom:none;background:#fff"></div><div class="a" style="left:347px;top:88px;width:1px;height:112px;background:#a8a8a8"></div><div class="t" style="left:359.6px;top:71.0px;font-size:12px;letter-spacing:-0.04px;color:#333;">Document Tools</div><div class="a" style="left:357px;top:98px;width:980px;height:1px;background:#d2d2d2"></div><div class="a" style="left:357px;top:189px;width:980px;height:1px;background:#d2d2d2"></div><div class="a" style="left:1347px;top:88px;width:1px;height:112px;background:#b4b4b4"></div><div class="a" style="left:494px;top:103px;width:1px;height:82px;background:#d0d0d0"></div><div class="a" style="left:756px;top:103px;width:1px;height:82px;background:#d0d0d0"></div><div class="a" style="left:851px;top:103px;width:1px;height:82px;background:#d0d0d0"></div><svg style="left:0;top:0" width="1586" height="200" viewBox="0 0 1586 200"><g opacity="1"><defs><linearGradient id="g11" x1="0.2" y1="0" x2="0.6" y2="1"><stop offset="0" stop-color="#7fcb7a"/><stop offset="0.45" stop-color="#3fa43a"/><stop offset="1" stop-color="#5bd955"/></linearGradient></defs><circle cx="377.5" cy="119.5" r="13.95" fill="#efefef" stroke="#666" stroke-width="1.05"/><circle cx="377.5" cy="119.5" r="11.2375" fill="url(#g11)" stroke="#3f6a40" stroke-width="0.9"/><path d="M367.35 119.21 A10.44 10.44 0 0 1 387.07 115.15 Q378.95 114.86 367.35 119.21Z" fill="#fff" opacity="0.42"/><g transform="translate(377.5 119.5) scale(14.5)"><path d="M-0.5 0 H0.5 M0 -0.5 V0.5" stroke="#1f7a22" stroke-opacity="0.55" stroke-width="0.3" stroke-linecap="round"/><path d="M-0.5 0 H0.5 M0 -0.5 V0.5" stroke="#fff" stroke-width="0.2" stroke-linecap="round"/></g></g><g opacity="1"><defs><linearGradient id="g12" x1="0.2" y1="0" x2="0.6" y2="1"><stop offset="0" stop-color="#7fcb7a"/><stop offset="0.45" stop-color="#3fa43a"/><stop offset="1" stop-color="#5bd955"/></linearGradient></defs><circle cx="424.6" cy="119.5" r="13.95" fill="#efefef" stroke="#666" stroke-width="1.05"/><circle cx="424.6" cy="119.5" r="11.2375" fill="url(#g12)" stroke="#3f6a40" stroke-width="0.9"/><path d="M414.45 119.21 A10.44 10.44 0 0 1 434.17 115.15 Q426.05 114.86 414.45 119.21Z" fill="#fff" opacity="0.42"/><g transform="translate(424.6 119.5) scale(14.5)"><path d="M-0.17 -0.5 H0.17 V-0.02 H0.44 L0 0.52 L-0.44 -0.02 H-0.17Z" fill="#fff"/></g></g><g transform="translate(465 107)"><path d="M0 0 L13.6 2.4 V24.4 L0 21.6Z" fill="#eaf3fb" stroke="#b7d3ec" stroke-width="0.7"/><path d="M1.4 2.6 L12 4.5" stroke="#8fc0ea" stroke-width="0.8"/><path d="M1.4 4.7 L12 6.6" stroke="#8fc0ea" stroke-width="0.8"/><path d="M1.4 6.8 L12 8.7" stroke="#8fc0ea" stroke-width="0.8"/><path d="M1.4 8.9 L12 10.8" stroke="#8fc0ea" stroke-width="0.8"/><path d="M1.4 11 L12 12.9" stroke="#8fc0ea" stroke-width="0.8"/><path d="M1.4 13.1 L12 15" stroke="#8fc0ea" stroke-width="0.8"/><path d="M1.4 15.2 L12 17.1" stroke="#8fc0ea" stroke-width="0.8"/><path d="M1.4 17.3 L12 19.2" stroke="#8fc0ea" stroke-width="0.8"/><path d="M1.4 19.4 L12 21.3" stroke="#8fc0ea" stroke-width="0.8"/><path d="M6.6 13 L12.2 8.6 V10.8 Q16.6 10.6 18.8 7.6 Q18.4 13.6 12.2 14.8 V17Z" fill="#36b436" stroke="#1f8c26" stroke-width="0.4"/></g><g transform="translate(526 105.8)"><path d="M-3 25.2 L-0.4 23.6 L14.4 27.7 L11.4 28.8Z" fill="#6a6f74" opacity="0.55"/><path d="M0 0 L14.9 2.4 V27.9 L0 24.4Z" fill="#f3f7fa"/><path d="M0.5 13.95 L8.195 14.508 L14.4 8.37 V27.3 L0.5 24.1Z" fill="#d6e4ec"/><path d="M0.5 22.4 L14.4 8.37 V27.3 L0.5 24.1Z" fill="#c2cfd8" opacity="0.8"/><path d="M0 24.4 V0 L14.9 2.4" fill="none" stroke="#6a9ac0" stroke-width="1.2"/><path d="M14.9 2.4 V27.9 L0 24.4" fill="none" stroke="#46586a" stroke-width="1.1"/></g><g transform="translate(595 105.8)"><path d="M-3 25.2 L-0.4 23.6 L14.4 27.7 L11.4 28.8Z" fill="#6a6f74" opacity="0.55"/><path d="M0 0 L14.9 2.4 V27.9 L0 24.4Z" fill="#f3f7fa"/><path d="M0.5 13.95 L8.195 14.508 L14.4 8.37 V27.3 L0.5 24.1Z" fill="#d6e4ec"/><path d="M0.5 22.4 L14.4 8.37 V27.3 L0.5 24.1Z" fill="#c2cfd8" opacity="0.8"/><path d="M0 24.4 V0 L14.9 2.4" fill="none" stroke="#6a9ac0" stroke-width="1.2"/><path d="M14.9 2.4 V27.9 L0 24.4" fill="none" stroke="#46586a" stroke-width="1.1"/></g><g transform="translate(594.6 112)"><ellipse cx="5.8" cy="16.8" rx="7" ry="3.6" fill="none" stroke="#5d6972" stroke-width="3.3" transform="rotate(-42 5.8 16.8)"/><ellipse cx="5.5" cy="16.3" rx="7" ry="3.6" fill="none" stroke="#aab4bc" stroke-width="1.5" transform="rotate(-42 5.5 16.3)"/><ellipse cx="5.3" cy="15.9" rx="6.6" ry="3.2" fill="none" stroke="#e6eaee" stroke-width="0.6" transform="rotate(-42 5.3 15.9)"/><ellipse cx="17.1" cy="6.7" rx="7" ry="3.6" fill="none" stroke="#5d6972" stroke-width="3.3" transform="rotate(-42 17.1 6.7)"/><ellipse cx="16.8" cy="6.2" rx="7" ry="3.6" fill="none" stroke="#aab4bc" stroke-width="1.5" transform="rotate(-42 16.8 6.2)"/><ellipse cx="16.6" cy="5.8" rx="6.6" ry="3.2" fill="none" stroke="#e6eaee" stroke-width="0.6" transform="rotate(-42 16.6 5.8)"/></g><g transform="translate(643.6 112)"><circle cx="-1" cy="-0.6" r="6.4" fill="#3f8fd6"/><path d="M-5.6 -3.4 Q-3 -6.6 0.6 -5.8 Q-0.6 -3 -2.6 -2.4 Q-2 0.4 -4.4 1.6 Q-6.6 0 -5.6 -3.4Z M1.6 -2.6 Q4 -3.4 5 -1 Q4.6 2.6 2 4.4 Q0.6 2 1.6 -2.6Z" fill="#58b848"/><circle cx="-3" cy="-3" r="2.4" fill="#fff" opacity="0.35"/><rect x="2" y="-1" width="6" height="8.2" fill="#d4d8dc" stroke="#8a9096" stroke-width="0.6"/><path d="M3.2 1 H6.8 M3.2 2.8 H6.8 M3.2 4.6 H6.8" stroke="#8a9096" stroke-width="0.7"/></g><path d="M640.29 132.21 L640.36 130.67 L642.04 130.67 L642.11 132.21 L643.24 132.67 L644.37 131.63 L645.57 132.83 L644.53 133.96 L644.99 135.09 L646.53 135.16 L646.53 136.84 L644.99 136.91 L644.53 138.04 L645.57 139.17 L644.37 140.37 L643.24 139.33 L642.11 139.79 L642.04 141.33 L640.36 141.33 L640.29 139.79 L639.16 139.33 L638.03 140.37 L636.83 139.17 L637.87 138.04 L637.41 136.91 L635.87 136.84 L635.87 135.16 L637.41 135.09 L637.87 133.96 L636.83 132.83 L638.03 131.63 L639.16 132.67Z M639.70 136.00 a1.50 1.50 0 1 0 3.00 0 a1.50 1.50 0 1 0 -3.00 0Z" fill="#e0e8f0" stroke="#2a4a78" stroke-width="1" fill-rule="evenodd"/><path d="M646.37 128.97 L646.41 127.85 L647.59 127.85 L647.63 128.97 L648.41 129.30 L649.23 128.53 L650.07 129.37 L649.30 130.19 L649.63 130.97 L650.75 131.01 L650.75 132.19 L649.63 132.23 L649.30 133.01 L650.07 133.83 L649.23 134.67 L648.41 133.90 L647.63 134.23 L647.59 135.35 L646.41 135.35 L646.37 134.23 L645.59 133.90 L644.77 134.67 L643.93 133.83 L644.70 133.01 L644.37 132.23 L643.25 132.19 L643.25 131.01 L644.37 130.97 L644.70 130.19 L643.93 129.37 L644.77 128.53 L645.59 129.30Z M646.00 131.60 a1.00 1.00 0 1 0 2.00 0 a1.00 1.00 0 1 0 -2.00 0Z" fill="#e0e8f0" stroke="#2a4a78" stroke-width="0.9" fill-rule="evenodd"/><rect x="645.6" y="135.6" width="6" height="7.4" fill="#d4d8dc" stroke="#8a9096" stroke-width="0.6"/><path d="M646.8 137.4 h3.6 m-3.6 1.8 h3.6 m-3.6 1.8 h3.6" stroke="#8a9096" stroke-width="0.7"/><g transform="translate(643.6 157.6) rotate(40)"><rect x="-8" y="-2.6" width="7.6" height="5.2" rx="2.6" fill="none" stroke="#1a1a78" stroke-width="1.9"/><rect x="0.4" y="-2.6" width="7.6" height="5.2" rx="2.6" fill="none" stroke="#1a1a78" stroke-width="1.9"/><path d="M-2.6 0 H2.6" stroke="#1a1a78" stroke-width="1.9"/></g><g opacity="1"><defs><linearGradient id="g13" x1="0.2" y1="0" x2="0.6" y2="1"><stop offset="0" stop-color="#e8606a"/><stop offset="0.45" stop-color="#c8101e"/><stop offset="1" stop-color="#e8283a"/></linearGradient></defs><circle cx="778.5" cy="119.4" r="13.95" fill="#efefef" stroke="#666" stroke-width="1.05"/><circle cx="778.5" cy="119.4" r="11.2375" fill="url(#g13)" stroke="#6a3a3c" stroke-width="0.9"/><path d="M768.35 119.11 A10.44 10.44 0 0 1 788.07 115.05 Q779.95 114.76 768.35 119.11Z" fill="#fff" opacity="0.42"/><g transform="translate(778.5 119.4) scale(14.5)"><rect x="-0.53" y="-0.2" width="1.06" height="0.4" rx="0.05" fill="#fff"/><rect x="-0.46" y="-0.13" width="0.92" height="0.26" fill="#c4c4c4"/><rect x="-0.46" y="-0.13" width="0.5" height="0.26" fill="#e2e2e2"/></g></g><g><path d="M813.2 129.6 L828 133 L829.4 130.6 L814 128Z" fill="#b9c4d4"/><path d="M827.6 131 L829.6 131.6 L829 133.4 L826.4 132.6Z" fill="#d9d2f0"/><path d="M814.8 106.5 L829 108.5 L828.2 131.8 L813.6 128.9Z" fill="#eef4fb" stroke="#c6d6ea" stroke-width="0.7"/><path d="M815.6 120 L828.4 121.6 L828.2 131 L814.4 128.4Z" fill="#e2ecf7"/><path d="M816.2 112.6 L819.3 116.6 L824.6 112.8" fill="none" stroke="#52c83a" stroke-width="2"/><path d="M831.6 108.4 L834.8 109.8 L827.2 126.6 L824 125.2Z" fill="#22c02e"/><path d="M833.4 109.2 L834.8 109.8 L827.2 126.6 L825.8 126Z" fill="#168c24"/><path d="M824 125.2 L827.2 126.6 L824.4 129Z" fill="#c8872a"/><path d="M824.2 127.6 L825.4 128.2 L824.4 129Z" fill="#5a3a16"/></g><g><path d="M1383 115.6 Q1392 113.6 1401.6 113.4 L1399 116.8 Q1391 117.2 1384 118.6Z" fill="#c9c9c9" opacity="0.6"/><path d="M1378.4 101.4 V99.6 H1385.4 M1388.4 96.6 H1392.4 M1388.4 104.8 V107.6 H1392.4 M1378.4 113 V116.6 Q1378.6 117.6 1380 117.6 H1385.6" stroke="#a4a8ae" stroke-width="1.1" fill="none"/><rect x="1373.2" y="101.2" width="11" height="12.2" fill="#4c80c2" stroke="#a9c5e6" stroke-width="0.9"/><rect x="1375.2" y="104" width="6.4" height="5.6" fill="#7ea8dc"/><path d="M1379 113 L1384 108.6 V113Z" fill="#2a5aa0"/><rect x="1375.8" y="105.6" width="5.2" height="2.8" fill="#cfe0f4" opacity="0.8"/><rect x="1385" y="97.5" width="7" height="7.5" rx="0.6" fill="#2aa95c"/><rect x="1385" y="115.2" width="7" height="7.6" rx="0.6" fill="#2aa95c"/><path d="M1388 99.4 L1389.2 99.4 L1388.6 103 L1387.6 103Z M1388 117.2 L1389.2 117.2 L1388.6 120.8 L1387.6 120.8Z" fill="#c8f0d4"/><rect x="1392" y="92.9" width="4.8" height="5.3" rx="0.6" fill="#d43a42"/><rect x="1392" y="106.6" width="4.8" height="5.2" rx="0.6" fill="#d43a42"/></g><g opacity="1"><defs><linearGradient id="g14" x1="0.2" y1="0" x2="0.6" y2="1"><stop offset="0" stop-color="#7fcb7a"/><stop offset="0.45" stop-color="#3fa43a"/><stop offset="1" stop-color="#5bd955"/></linearGradient></defs><circle cx="1452" cy="107.3" r="14.05" fill="#efefef" stroke="#666" stroke-width="1.05"/><circle cx="1452" cy="107.3" r="11.315" fill="url(#g14)" stroke="#3f6a40" stroke-width="0.9"/><path d="M1441.78 107.008 A10.512 10.512 0 0 1 1461.64 102.92 Q1453.46 102.628 1441.78 107.008Z" fill="#fff" opacity="0.42"/><g transform="translate(1452 107.3) scale(14.6)"><path d="M-0.58 0 L-0.2 -0.36 V-0.14 H0.2 V-0.36 L0.58 0 L0.2 0.36 V0.14 H-0.2 V0.36Z" fill="#fff"/></g></g><g><path d="M1508 119.4 L1529 124 L1532.4 121.4 L1529.6 120Z" fill="#b8bcc0" opacity="0.6"/><path d="M1507.2 93.9 L1529.6 96 V122.6 L1507.2 117.8Z" fill="#f2f7fc" stroke="#8cc4e2" stroke-width="1.5" stroke-linejoin="round"/><path d="M1507.2 93.9 L1529.6 96" stroke="#62a6cf" stroke-width="2" fill="none"/><path d="M1508.4 116.6 L1528.6 121 V119 L1508.4 114.8Z" fill="#d5eaf4"/><path d="M1510.6 102.6 L1515.4 103.2" stroke="#b9bdc2" stroke-width="1.1"/><path d="M1510.42 104.2 L1514.6 104.8" stroke="#b9bdc2" stroke-width="1.1"/><path d="M1510.24 105.8 L1515.4 106.4" stroke="#b9bdc2" stroke-width="1.1"/><path d="M1510.06 107.4 L1514.6 108" stroke="#b9bdc2" stroke-width="1.1"/><path d="M1509.88 109 L1515.4 109.6" stroke="#b9bdc2" stroke-width="1.1"/><path d="M1509.7 110.6 L1514.6 111.2" stroke="#b9bdc2" stroke-width="1.1"/><path d="M1521.6 102.1 L1526 102.7" stroke="#b9bdc2" stroke-width="1.1"/><path d="M1521.1 103.8 L1526 104.4" stroke="#b9bdc2" stroke-width="1.1"/><path d="M1520.6 105.5 L1526 106.1" stroke="#b9bdc2" stroke-width="1.1"/><path d="M1521.6 107.2 L1526 107.8" stroke="#b9bdc2" stroke-width="1.1"/><path d="M1521.1 108.9 L1526 109.5" stroke="#b9bdc2" stroke-width="1.1"/><path d="M1520.6 110.6 L1526 111.2" stroke="#b9bdc2" stroke-width="1.1"/><path d="M1521.6 112.3 L1526 112.9" stroke="#b9bdc2" stroke-width="1.1"/><path d="M1521.1 114 L1526 114.6" stroke="#b9bdc2" stroke-width="1.1"/><path d="M1514.6 99.2 L1525.6 100.6 M1515 113.2 L1525.8 115.2 M1515 117 L1525.8 119.2" stroke="#c9ced4" stroke-width="0.8"/></g></svg><div class="t" style="left:366.4px;top:141.0px;font-size:12px;letter-spacing:-0.17px;color:#444;">New</div><div class="t" style="left:411.0px;top:141.0px;font-size:12px;letter-spacing:-0.25px;color:#444;">From</div><div class="t" style="left:400.6px;top:155.0px;font-size:12px;letter-spacing:-0.09px;color:#444;">Template</div><div class="t" style="left:458.3px;top:141.0px;font-size:12px;letter-spacing:-0.25px;color:#444;">From</div><div class="t" style="left:464.9px;top:155.0px;font-size:12px;letter-spacing:-1.14px;color:#444;">V7</div><div class="t" style="left:500.6px;top:141.0px;font-size:12px;letter-spacing:0.02px;color:#444;">Import From</div><div class="t" style="left:506.2px;top:155.0px;font-size:12px;letter-spacing:-0.00px;color:#444;">Document</div><div class="t" style="left:583.4px;top:141.0px;font-size:12px;letter-spacing:-0.30px;color:#444;">Link To</div><div class="t" style="left:574.4px;top:155.0px;font-size:12px;letter-spacing:-0.00px;color:#444;">Document</div><div class="t" style="left:655.3px;top:107.0px;font-size:12px;letter-spacing:-0.14px;color:#444;">From Library</div><div class="t" style="left:655.3px;top:130.0px;font-size:12px;letter-spacing:-0.25px;color:#444;">From Any Process</div><div class="t" style="left:655.3px;top:153.0px;font-size:12px;letter-spacing:-0.51px;color:#444;">From URL</div><div class="t" style="left:762.5px;top:141.0px;font-size:12px;letter-spacing:-0.23px;color:#444;">Delete</div><div class="t" style="left:803.5px;top:141.0px;font-size:12px;letter-spacing:-0.28px;color:#444;">Mark as</div><div class="t" style="left:804.3px;top:155.0px;font-size:12px;letter-spacing:-0.26px;color:#444;">Primary</div><div class="t" style="left:362.7px;top:174.0px;font-size:12px;letter-spacing:-0.02px;color:#444;">Create Work Instruction</div><div class="t" style="left:591.7px;top:174.0px;font-size:12px;letter-spacing:-0.05px;color:#444;">Add Element</div><div class="t" style="left:771.0px;top:174.0px;font-size:12px;letter-spacing:-0.17px;color:#444;">Edit Element</div><div class="t" style="left:1364.4px;top:127.0px;font-size:12px;letter-spacing:0.04px;color:#222;">Material</div><div class="t" style="left:1364.4px;top:143.0px;font-size:12px;letter-spacing:-0.35px;color:#222;">Setup</div><div class="t" style="left:1424.4px;top:127.0px;font-size:12px;letter-spacing:-0.13px;color:#222;">Entry / Exit</div><div class="t" style="left:1498.4px;top:127.0px;font-size:12px;letter-spacing:-0.54px;color:#222;">Recipes</div><div class="a" style="left:346px;top:200px;width:1223px;height:811px;background:#383838"></div><div class="a" style="left:346px;top:302px;width:20px;height:659px;background:#c2ced7"></div><div class="a" style="left:366px;top:251px;width:1153px;height:710px;background:#c2ced7"></div><div class="t" style="left:388.4px;top:271.0px;font-size:19px;letter-spacing:-1.20px;color:#1e1e1e;-webkit-text-stroke:0.5px #c2ced7;">Settings</div><div class="a" style="left:1474px;top:273px;width:18px;height:18px;border:1px solid #8a949b;background:#efefef"></div><svg style="left:1474px;top:273px" width="18" height="18" viewBox="0 0 18 18" ><g opacity="1"><defs><linearGradient id="g15" x1="0.2" y1="0" x2="0.6" y2="1"><stop offset="0" stop-color="#e85a62"/><stop offset="0.45" stop-color="#c8101e"/><stop offset="1" stop-color="#e02030"/></linearGradient></defs><circle cx="8.9" cy="9" r="6.35" fill="#f3f3f3" stroke="#7a7a7a" stroke-width="0.9"/><circle cx="8.9" cy="9" r="4.896" fill="url(#g15)" stroke="#767a76" stroke-width="0.7"/><g transform="translate(8.9 9) scale(6.8)"><path d="M-0.36 -0.36 L0.36 0.36 M0.36 -0.36 L-0.36 0.36" stroke="#fff" stroke-width="0.3" stroke-linecap="round"/></g></g></svg><div class="a" style="left:381px;top:298px;width:51px;height:23px;border:1px solid #a6a6a6;border-bottom:none;background:linear-gradient(#efefef,#e2e2e2)"></div><div class="t" style="left:390.6px;top:304.0px;font-size:12px;letter-spacing:-0.82px;color:#333;">Basics</div><div class="a" style="left:378px;top:320px;width:1129px;height:597px;border:1px solid #acacac;background:#fff"></div><div class="a" style="left:431px;top:296px;width:107px;height:25px;border:1px solid #acacac;border-bottom:none;background:#fff"></div><div class="t" style="left:440.6px;top:304.0px;font-size:12px;letter-spacing:-0.19px;color:#333;">Packout Settings</div><div class="a" style="left:1488px;top:323px;width:16px;height:591px;background:#f0f0f0"></div><div class="a" style="left:1488px;top:359px;width:16px;height:475px;background:#c1c1c1"></div><svg style="left:1488px;top:323px" width="16" height="20" viewBox="0 0 16 20" ><path d="M5 11.2 L8.3 7.2 L11.6 11.2" fill="none" stroke="#505050" stroke-width="1.7"/></svg><svg style="left:1488px;top:897px" width="16" height="17" viewBox="0 0 16 17" ><path d="M5 6.6 L8.3 10.6 L11.6 6.6" fill="none" stroke="#505050" stroke-width="1.7"/></svg><div class="t" style="left:403.0px;top:326.0px;font-size:18px;letter-spacing:-0.92px;color:#444;-webkit-text-stroke:0.55px #fff;">Packout By</div><div class="t" style="left:413.4px;top:359.0px;font-size:12px;letter-spacing:-0.33px;color:#333;">Box Type:</div><div class="a" style="left:513px;top:355px;width:962px;height:18px;border:1px solid #acacac;background:#fff"></div><div class="t" style="left:517.7px;top:359.0px;font-size:12px;letter-spacing:-0.08px;color:#333;">48"x48"x48"</div><div class="a" style="left:1458px;top:357px;width:15px;height:14px;border:1px solid #a6a6a6;background:linear-gradient(#f2f2f2,#e0e0e0)"></div><svg style="left:1458px;top:357px" width="15" height="14" viewBox="0 0 15 14" ><path d="M4.2 5.3 L7.5 9.1 L10.8 5.3" fill="none" stroke="#5c5c5c" stroke-width="1.7"/></svg><div class="t" style="left:403.0px;top:391.0px;font-size:18px;letter-spacing:-0.93px;color:#444;-webkit-text-stroke:0.55px #fff;">Packing List:</div><div class="a" style="left:413px;top:420px;width:18px;height:18px;border:1px solid #a8a8a8;background:linear-gradient(#f2f2f2,#dedede)"></div><svg style="left:413px;top:420px" width="18" height="18" viewBox="0 0 18 18" ><g transform="translate(0.6 0.2)"><path d="M8 2.6 L13.4 5.2 V11.6 L8 14.6 L2.8 11.6 V5.2Z M2.8 5.2 L8 8 L13.4 5.2 M8 8 V14.6" fill="none" stroke="#111" stroke-width="1.2" stroke-linejoin="round"/><circle cx="11.4" cy="11.4" r="2.6" fill="#e8e8e8" stroke="#111" stroke-width="1"/><path d="M13.2 13.4 L15.6 15.8" stroke="#111" stroke-width="1.3"/></g></svg><div class="a" style="left:435px;top:420px;width:18px;height:18px;border:1px solid #a8a8a8;background:linear-gradient(#f2f2f2,#dedede)"></div><svg style="left:435px;top:420px" width="18" height="18" viewBox="0 0 18 18" ><g transform="translate(0.6 0.2)"><path d="M12.6 4 V2.8 H3.4 V15.2 H12.6 V14" fill="none" stroke="#111" stroke-width="1.1"/><rect x="5" y="5.6" width="4.6" height="1" fill="#111"/><path d="M10.2 5.2 L11.6 6.8 L14.6 3" fill="none" stroke="#111" stroke-width="1.1"/><rect x="5" y="9" width="4.6" height="1" fill="#111"/><path d="M10.2 8.6 L11.6 10.2 L14.6 6.4" fill="none" stroke="#111" stroke-width="1.1"/><rect x="5" y="12.4" width="4.6" height="1" fill="#111"/><path d="M10.2 12 L11.6 13.6 L14.6 9.8" fill="none" stroke="#111" stroke-width="1.1"/></g></svg><div class="a" style="left:457px;top:420px;width:18px;height:18px;border:1px solid #a8a8a8;background:linear-gradient(#f2f2f2,#dedede)"></div><svg style="left:457px;top:420px" width="18" height="18" viewBox="0 0 18 18" ><g transform="translate(0.6 0.2)"><path d="M8 2.6 L13.4 5.2 V11.6 L8 14.6 L2.8 11.6 V5.2Z M2.8 5.2 L8 8 L13.4 5.2 M8 8 V14.6" fill="none" stroke="#111" stroke-width="1.2" stroke-linejoin="round"/><circle cx="12.4" cy="12.6" r="3.2" fill="#111"/><rect x="10.4" y="12" width="4" height="1.2" fill="#fff"/></g></svg><div class="a" style="left:413px;top:442px;width:1062px;height:200px;border:1px solid #c8c8c8;background:#fff"></div><div class="a" style="left:414px;top:498px;width:1060px;height:27px;background:#b0d5f0"></div><div class="a" style="left:495px;top:443px;width:1px;height:162px;background:#d0d0d0"></div><div class="a" style="left:575px;top:443px;width:1px;height:162px;background:#d0d0d0"></div><div class="a" style="left:695px;top:443px;width:1px;height:162px;background:#d0d0d0"></div><div class="a" style="left:815px;top:443px;width:1px;height:162px;background:#d0d0d0"></div><div class="a" style="left:863px;top:443px;width:1px;height:162px;background:#d0d0d0"></div><div class="a" style="left:925px;top:443px;width:1px;height:162px;background:#d0d0d0"></div><div class="a" style="left:1006px;top:443px;width:1px;height:162px;background:#d0d0d0"></div><div class="a" style="left:1088px;top:443px;width:1px;height:162px;background:#d0d0d0"></div><div class="a" style="left:1170px;top:443px;width:1px;height:162px;background:#d0d0d0"></div><div class="a" style="left:1228px;top:443px;width:1px;height:162px;background:#d0d0d0"></div><div class="a" style="left:1310px;top:443px;width:1px;height:162px;background:#d0d0d0"></div><div class="a" style="left:1391px;top:443px;width:1px;height:162px;background:#d0d0d0"></div><div class="a" style="left:414px;top:497px;width:1060px;height:1px;background:#d0d0d0"></div><div class="a" style="left:414px;top:524px;width:1060px;height:1px;background:#d0d0d0"></div><div class="a" style="left:414px;top:551px;width:1060px;height:1px;background:#d0d0d0"></div><div class="a" style="left:414px;top:578px;width:1060px;height:1px;background:#d0d0d0"></div><div class="a" style="left:414px;top:605px;width:1060px;height:1px;background:#d0d0d0"></div><div class="t" style="left:418.4px;top:465.0px;font-size:12px;letter-spacing:-0.10px;color:#333;">Name</div><div class="t" style="left:500.3px;top:465.0px;font-size:12px;letter-spacing:-0.33px;color:#333;">Revision</div><div class="t" style="left:580.2px;top:465.0px;font-size:12px;letter-spacing:-0.14px;color:#333;">Revision Mode</div><div class="t" style="left:700.3px;top:465.0px;font-size:12px;letter-spacing:-0.00px;color:#333;">Description</div><div class="t" style="left:820.2px;top:457.0px;font-size:12px;letter-spacing:-0.09px;color:#333;">Quanti</div><div class="t" style="left:820.2px;top:473.0px;font-size:12px;letter-spacing:-0.37px;color:#333;">ty</div><div class="t" style="left:868.0px;top:457.0px;font-size:12px;letter-spacing:0.19px;color:#333;">Unit of</div><div class="t" style="left:868.0px;top:473.0px;font-size:12px;letter-spacing:-0.54px;color:#333;">Issue</div><div class="t" style="left:930.4px;top:457.0px;font-size:12px;letter-spacing:-0.03px;color:#333;">Verification</div><div class="t" style="left:930.4px;top:473.0px;font-size:12px;letter-spacing:0.14px;color:#333;">Mode</div><div class="t" style="left:1011.4px;top:449.0px;font-size:12px;letter-spacing:-0.24px;color:#333;">Has No</div><div class="t" style="left:1011.4px;top:465.0px;font-size:12px;letter-spacing:-0.17px;color:#333;">Unresolved</div><div class="t" style="left:1011.4px;top:481.0px;font-size:12px;letter-spacing:-0.24px;color:#333;">Defects</div><div class="t" style="left:1093.3px;top:449.0px;font-size:12px;letter-spacing:-0.24px;color:#333;">Has No</div><div class="t" style="left:1093.3px;top:465.0px;font-size:12px;letter-spacing:-0.17px;color:#333;">Unresolved</div><div class="t" style="left:1093.3px;top:481.0px;font-size:12px;letter-spacing:-0.16px;color:#333;">Symptoms</div><div class="t" style="left:1175.2px;top:449.0px;font-size:12px;letter-spacing:0.03px;color:#333;">No</div><div class="t" style="left:1175.2px;top:465.0px;font-size:12px;letter-spacing:-0.38px;color:#333;">Failed</div><div class="t" style="left:1175.2px;top:481.0px;font-size:12px;letter-spacing:-0.41px;color:#333;">Status</div><div class="t" style="left:1233.3px;top:465.0px;font-size:12px;letter-spacing:-0.41px;color:#333;">Process Vali...</div><div class="t" style="left:1315.0px;top:449.0px;font-size:12px;letter-spacing:-0.06px;color:#333;">Validate</div><div class="t" style="left:1315.0px;top:465.0px;font-size:12px;letter-spacing:-0.12px;color:#333;">Captured</div><div class="t" style="left:1315.0px;top:481.0px;font-size:12px;letter-spacing:-0.08px;color:#333;">Materials</div><div class="t" style="left:1396.0px;top:457.0px;font-size:12px;letter-spacing:-0.34px;color:#333;">Pack Items</div><div class="t" style="left:1396.0px;top:473.0px;font-size:12px;letter-spacing:0.05px;color:#333;">Individually</div><div class="t" style="left:418.0px;top:506.0px;font-size:12px;letter-spacing:-0.14px;color:#333;">010-1026</div><div class="t" style="left:578.2px;top:506.0px;font-size:12px;letter-spacing:-0.34px;color:#333;">Use Specific</div><div class="t" style="left:700.2px;top:506.0px;font-size:12px;letter-spacing:-0.22px;color:#333;">Matte Black, Frame...</div><div class="t" style="left:868.4px;top:506.0px;font-size:12px;letter-spacing:-0.57px;color:#333;">Pieces</div><div class="t" style="left:931.2px;top:506.0px;font-size:12px;letter-spacing:-0.49px;color:#333;">Scan UID</div><div class="a" style="left:1041px;top:505px;width:13px;height:13px;border:1px solid #8c8c8c;background:#fff"></div><div class="a" style="left:1123px;top:505px;width:13px;height:13px;border:1px solid #8c8c8c;background:#fff"></div><div class="a" style="left:1193px;top:505px;width:13px;height:13px;border:1px solid #8c8c8c;background:#fff"></div><div class="a" style="left:1427px;top:505px;width:13px;height:13px;border:1px solid #8c8c8c;background:#fff"></div><div class="t" style="left:1234.4px;top:506.0px;font-size:12px;letter-spacing:-0.08px;color:#333;">No Validati...</div><div class="t" style="left:1316.2px;top:506.0px;font-size:12px;letter-spacing:0.12px;color:#333;">Not Applicab</div><div class="t" style="left:418.0px;top:533.0px;font-size:12px;letter-spacing:-0.14px;color:#333;">010-2049</div><div class="t" style="left:578.2px;top:533.0px;font-size:12px;letter-spacing:-0.34px;color:#333;">Use Specific</div><div class="t" style="left:700.2px;top:533.0px;font-size:12px;letter-spacing:-0.16px;color:#333;">100 Series Aluminu...</div><div class="t" style="left:821.8px;top:533.0px;font-size:12px;letter-spacing:0.00px;color:#333;">1</div><div class="t" style="left:868.4px;top:533.0px;font-size:12px;letter-spacing:-0.57px;color:#333;">Pieces</div><div class="t" style="left:931.2px;top:533.0px;font-size:12px;letter-spacing:-0.49px;color:#333;">Scan UID</div><div class="a" style="left:1041px;top:532px;width:13px;height:13px;border:1px solid #8c8c8c;background:#fff"></div><div class="a" style="left:1123px;top:532px;width:13px;height:13px;border:1px solid #8c8c8c;background:#fff"></div><div class="a" style="left:1193px;top:532px;width:13px;height:13px;border:1px solid #8c8c8c;background:#fff"></div><div class="a" style="left:1427px;top:532px;width:13px;height:13px;border:1px solid #8c8c8c;background:#fff"></div><div class="t" style="left:1234.4px;top:533.0px;font-size:12px;letter-spacing:-0.08px;color:#333;">No Validati...</div><div class="t" style="left:1316.2px;top:533.0px;font-size:12px;letter-spacing:0.12px;color:#333;">Not Applicab</div><div class="t" style="left:418.0px;top:560.0px;font-size:12px;letter-spacing:-0.18px;color:#333;">1010-M6C0...</div><div class="t" style="left:578.2px;top:560.0px;font-size:12px;letter-spacing:-0.34px;color:#333;">Use Specific</div><div class="t" style="left:700.2px;top:560.0px;font-size:12px;letter-spacing:-0.76px;color:#333;">SCREW PHILLIPS F...</div><div class="t" style="left:821.8px;top:560.0px;font-size:12px;letter-spacing:0.00px;color:#333;">1</div><div class="t" style="left:868.4px;top:560.0px;font-size:12px;letter-spacing:-0.57px;color:#333;">Pieces</div><div class="t" style="left:931.2px;top:560.0px;font-size:12px;letter-spacing:-0.49px;color:#333;">Scan UID</div><div class="a" style="left:1041px;top:559px;width:13px;height:13px;border:1px solid #8c8c8c;background:#fff"></div><div class="a" style="left:1123px;top:559px;width:13px;height:13px;border:1px solid #8c8c8c;background:#fff"></div><div class="a" style="left:1193px;top:559px;width:13px;height:13px;border:1px solid #8c8c8c;background:#fff"></div><div class="a" style="left:1427px;top:559px;width:13px;height:13px;border:1px solid #8c8c8c;background:#fff"></div><div class="t" style="left:1234.4px;top:560.0px;font-size:12px;letter-spacing:-0.08px;color:#333;">No Validati...</div><div class="t" style="left:1316.2px;top:560.0px;font-size:12px;letter-spacing:0.12px;color:#333;">Not Applicab</div><div class="t" style="left:418.0px;top:587.0px;font-size:12px;letter-spacing:-0.14px;color:#333;">042-1010</div><div class="t" style="left:578.2px;top:587.0px;font-size:12px;letter-spacing:-0.34px;color:#333;">Use Specific</div><div class="t" style="left:700.2px;top:587.0px;font-size:12px;letter-spacing:-0.24px;color:#333;">Shimano Claris</div><div class="t" style="left:821.8px;top:587.0px;font-size:12px;letter-spacing:0.00px;color:#333;">1</div><div class="t" style="left:868.4px;top:587.0px;font-size:12px;letter-spacing:-0.57px;color:#333;">Pieces</div><div class="t" style="left:931.2px;top:587.0px;font-size:12px;letter-spacing:-0.49px;color:#333;">Scan UID</div><div class="a" style="left:1041px;top:586px;width:13px;height:13px;border:1px solid #8c8c8c;background:#fff"></div><div class="a" style="left:1123px;top:586px;width:13px;height:13px;border:1px solid #8c8c8c;background:#fff"></div><div class="a" style="left:1193px;top:586px;width:13px;height:13px;border:1px solid #8c8c8c;background:#fff"></div><div class="a" style="left:1427px;top:586px;width:13px;height:13px;border:1px solid #8c8c8c;background:#fff"></div><div class="t" style="left:1234.4px;top:587.0px;font-size:12px;letter-spacing:-0.08px;color:#333;">No Validati...</div><div class="t" style="left:1316.2px;top:587.0px;font-size:12px;letter-spacing:0.12px;color:#333;">Not Applicab</div><div class="a" style="left:816px;top:498px;width:47px;height:26px;border:1px solid #8cbde6;background:#fff"></div><div class="a" style="left:846px;top:500px;width:15px;height:22px;border:1px solid #b4b4b4;background:#ededed"></div><svg style="left:846px;top:500px" width="15" height="22" viewBox="0 0 15 22" ><path d="M4.4 7.5 L7.6 3.7 L10.8 7.5" fill="none" stroke="#5a5a5a" stroke-width="1.6"/><path d="M4.4 14.1 L7.6 17.9 L10.8 14.1" fill="none" stroke="#5a5a5a" stroke-width="1.6"/></svg><div class="a" style="left:833px;top:503px;width:1px;height:16px;background:#222"></div><div class="t" style="left:834.6px;top:506.0px;font-size:12px;letter-spacing:0.00px;color:#444;">1</div><div class="t" style="left:403.0px;top:660.0px;font-size:18px;letter-spacing:-0.63px;color:#444;-webkit-text-stroke:0.55px #fff;">Labeling</div><div class="t" style="left:413.4px;top:695.0px;font-size:12px;letter-spacing:-0.21px;color:#333;">Label Template:</div><div class="a" style="left:513px;top:689px;width:917px;height:22px;border:1px solid #acacac;background:#fff"></div><div class="a" style="left:1413px;top:691px;width:15px;height:18px;border:1px solid #a6a6a6;background:linear-gradient(#f2f2f2,#e0e0e0)"></div><svg style="left:1413px;top:691px" width="15" height="18" viewBox="0 0 15 18" ><path d="M4.2 7.3 L7.5 11.1 L10.8 7.3" fill="none" stroke="#5c5c5c" stroke-width="1.7"/></svg><div class="a" style="left:1435px;top:689px;width:40px;height:22px;border:1px solid #a8a8a8;background:linear-gradient(#f0f0f0,#e0e0e0)"></div><svg style="left:1435px;top:689px" width="40" height="22" viewBox="0 0 40 22" ><g opacity="1"><defs><linearGradient id="g16" x1="0.2" y1="0" x2="0.6" y2="1"><stop offset="0" stop-color="#58c254"/><stop offset="0.45" stop-color="#2a8f2c"/><stop offset="1" stop-color="#3fb53c"/></linearGradient></defs><circle cx="19.8" cy="10.9" r="6.35" fill="#f3f3f3" stroke="#7a7a7a" stroke-width="0.9"/><circle cx="19.8" cy="10.9" r="4.896" fill="url(#g16)" stroke="#767a76" stroke-width="0.7"/><g transform="translate(19.8 10.9) scale(6.8)"><path d="M-0.52 0 H0.52 M0 -0.52 V0.52" stroke="#fff" stroke-width="0.3"/></g></g></svg><div class="t" style="left:403.0px;top:729.0px;font-size:18px;letter-spacing:-0.44px;color:#444;-webkit-text-stroke:0.55px #fff;">Options</div><div class="t" style="left:413.4px;top:764.0px;font-size:12px;letter-spacing:-0.24px;color:#333;">Batch Restrictions:</div><div class="a" style="left:513px;top:758px;width:250px;height:22px;border:1px solid #acacac;background:#fff"></div><div class="t" style="left:517.7px;top:764.0px;font-size:12px;letter-spacing:0.04px;color:#333;">Allow units from any batch to be packed</div><div class="a" style="left:746px;top:760px;width:15px;height:18px;border:1px solid #a6a6a6;background:linear-gradient(#f2f2f2,#e0e0e0)"></div><svg style="left:746px;top:760px" width="15" height="18" viewBox="0 0 15 18" ><path d="M4.2 7.3 L7.5 11.1 L10.8 7.3" fill="none" stroke="#5c5c5c" stroke-width="1.7"/></svg><div class="a" style="left:413px;top:789px;width:13px;height:13px;border:1px solid #6e6e6e;background:#fff"></div><svg style="left:413px;top:789px" width="13" height="13" viewBox="0 0 13 13" ><path d="M2.8 6.6 L5.4 9.4 L10.4 3" fill="none" stroke="#1a1a1a" stroke-width="1.5"/></svg><div class="t" style="left:430.2px;top:790.0px;font-size:12px;letter-spacing:-0.25px;color:#333;">Force Complete Boxes</div><div class="a" style="left:413px;top:815px;width:13px;height:13px;border:1px solid #6e6e6e;background:#fff"></div><div class="t" style="left:430.2px;top:816.0px;font-size:12px;letter-spacing:-0.07px;color:#333;">Allow Supervisory Override for Incomplete Boxes</div><div class="a" style="left:413px;top:841px;width:13px;height:13px;border:1px solid #6e6e6e;background:#fff"></div><div class="t" style="left:430.2px;top:842.0px;font-size:12px;letter-spacing:-0.15px;color:#333;">Export completed boxes as XML</div><div class="a" style="left:413px;top:867px;width:13px;height:13px;border:1px solid #6e6e6e;background:#fff"></div><svg style="left:413px;top:867px" width="13" height="13" viewBox="0 0 13 13" ><path d="M2.8 6.6 L5.4 9.4 L10.4 3" fill="none" stroke="#1a1a1a" stroke-width="1.5"/></svg><div class="t" style="left:430.2px;top:868.0px;font-size:12px;letter-spacing:0.01px;color:#333;">Validate Entry Conditions of this operation for each item added</div><div class="a" style="left:393px;top:901px;width:1082px;height:13px;border:1px solid #d0d0d0;border-bottom:none"></div><div class="a" style="left:401px;top:896px;width:72px;height:12px;background:#fff"></div><div class="t" style="left:405.2px;top:897.0px;font-size:12.4px;letter-spacing:-0.40px;color:#222;font-weight:bold;">Fire Alarms</div><div class="a" style="left:1429px;top:929px;width:75px;height:22px;border:1px solid #8e8e8e;background:linear-gradient(#f4f4f4,#e0e0e0)"></div><div class="t" style="left:1458.4px;top:935.0px;font-size:12px;letter-spacing:-0.67px;color:#333;">OK</div>
</body>
</html>
